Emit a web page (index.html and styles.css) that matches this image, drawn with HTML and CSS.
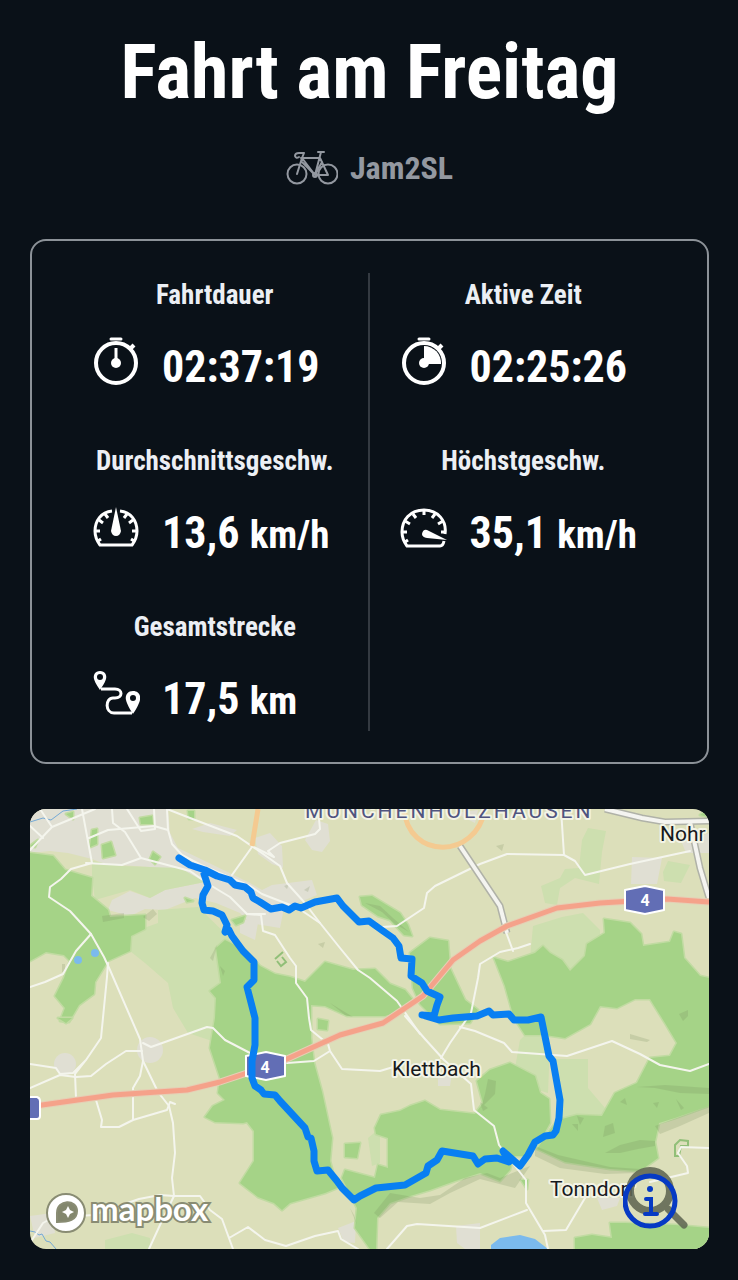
FILE: index.html
```
<!DOCTYPE html>
<html lang="de">
<head>
  <meta charset="UTF-8">
  <meta name="viewport" content="width=device-width, initial-scale=1">
  <title>Fahrt am Freitag</title>
  <link rel="stylesheet" href="styles.css">
</head>
<body>

<header class="kopf">
  <h1>Fahrt am Freitag</h1>
  <p class="rad">
    <svg class="rad-icon" viewBox="0 0 52 36" fill="none" stroke="currentColor" stroke-width="2" stroke-linecap="round" stroke-linejoin="round" aria-hidden="true">
      <circle cx="11" cy="24" r="9.5"/>
      <circle cx="42" cy="24" r="9.5"/>
      <path d="M11 24L16 8L29 25H42L34 8H15M29 25L35 2M32 2H38M16 12L29 25M16 8L18 3H13Q9 3 9 6Q10 9 13 7M29 25L36 12"/>
      <circle cx="29" cy="25" r="2"/>
    </svg>
    <span>Jam2SL</span>
  </p>
</header>

<main>
  <section class="werte">
    <div class="spalte">
      <div class="wert">
        <h2>Fahrtdauer</h2>
        <p>
          <svg class="icon" viewBox="0 0 48 48" fill="none" stroke="currentColor" stroke-width="4" aria-hidden="true">
            <circle cx="24" cy="26" r="20"/>
            <path d="M24 11V26" stroke-width="3"/>
            <path d="M19 2H29" stroke-width="3" stroke-linecap="round"/>
            <path d="M38 12L42 8"/>
            <circle cx="24" cy="26" r="5" fill="currentColor" stroke="none"/>
          </svg>
          <span>02:37:19</span>
        </p>
      </div>
      <div class="wert">
        <h2>Durchschnittsgeschw.</h2>
        <p>
          <svg class="icon" viewBox="0 0 48 48" fill="none" stroke="currentColor" stroke-width="3" aria-hidden="true">
            <path d="M20 8C9 9 3 18 3 28C3 34 5 38 8 42H40C43 38 45 34 45 28C45 18 39 9 28 8"/>
            <path d="M3 28H8M6 38L9 36M7 17L11 20M13 11L16 15M45 28H40M42 38L39 36M41 17L37 20M35 11L32 15"/>
            <path d="M24 4L29 28Q28 33 24 33Q20 33 19 28Z" fill="currentColor" stroke="none"/>
          </svg>
          <span>13,6 <small>km/h</small></span>
        </p>
      </div>
      <div class="wert">
        <h2>Gesamtstrecke</h2>
        <p>
          <svg class="icon" viewBox="0 0 48 48" fill="none" aria-hidden="true">
            <path d="M9 20H23C31 20 31 29 23 29H21C13 29 13 44 22 44H40" stroke="currentColor" stroke-width="3"/>
            <path fill-rule="evenodd" d="M8 2C3 2 1 6 2 10C3 14 8 21 8 21C8 21 13 14 14 10C15 6 13 2 8 2ZM8 5A3 3 0 1 1 8 11A3 3 0 1 1 8 5Z" fill="currentColor"/>
            <path fill-rule="evenodd" d="M41 22C35 22 33 27 34 31C35 36 41 45 41 45C41 45 47 36 48 31C49 27 47 22 41 22ZM41 26A3 3 0 1 1 41 32A3 3 0 1 1 41 26Z" fill="currentColor"/>
          </svg>
          <span>17,5 <small>km</small></span>
        </p>
      </div>
    </div>
    <div class="spalte">
      <div class="wert">
        <h2>Aktive Zeit</h2>
        <p>
          <svg class="icon" viewBox="0 0 48 48" fill="none" stroke="currentColor" stroke-width="4" aria-hidden="true">
            <circle cx="24" cy="26" r="20"/>
            <path d="M19 2H29" stroke-width="3" stroke-linecap="round"/>
            <path d="M38 12L42 8"/>
            <path d="M24 9A17 17 0 0 1 41 27H24Z" fill="currentColor" stroke="none"/>
            <circle cx="24" cy="26" r="5" fill="currentColor" stroke="none"/>
          </svg>
          <span>02:25:26</span>
        </p>
      </div>
      <div class="wert">
        <h2>Höchstgeschw.</h2>
        <p>
          <svg class="icon" viewBox="0 0 48 48" fill="none" stroke="currentColor" stroke-width="3" aria-hidden="true">
            <path d="M45 31C47 18 38 7 24 7C10 7 2 17 2 29C2 35 4 39 7 43H40Q43 43 44 38"/>
            <path d="M2 29H7M5 39L8 37M5 18L10 21M13 11L16 15M24 7V12M35 11L32 15M43 18L38 21M45 29H41"/>
            <path d="M27 27L47 37L27 35Q22 34 22 31Q23 26 27 27Z" fill="currentColor" stroke="none"/>
          </svg>
          <span>35,1 <small>km/h</small></span>
        </p>
      </div>
    </div>
  </section>

  <section class="karte">
    <svg class="karte-bild" viewBox="30 811 679 440" role="img" aria-label="Karte der Strecke">
      <rect class="land" x="30" y="811" width="679" height="440"/>

      <!-- Orte -->
      <path class="ort" d="M30 811H168L170 835L178 850L205 863L250 885L262 892L272 887L312 882L317 897L300 904L284 910L280 930L250 925L240 915L216 905L195 900L165 912L145 911L130 918L108 912L112 902L130 893L150 900L165 892L205 884L150 869L105 866L92 861L68 855L50 853L30 855Z"/>
      <path class="ort" d="M192 831L210 825L237 832L230 838L203 834ZM255 840L270 835L282 848L283 870L272 866L258 856ZM316 822L328 826L330 843L322 854L312 852L305 842ZM240 920L258 925L255 942L240 935ZM632 859L662 860L657 886H631ZM682 845L709 835V855H686ZM455 815L478 812L475 825Z"/>
      <circle class="ort" cx="65" cy="1066" r="11"/>
      <circle class="ort" cx="150" cy="1052" r="13"/>
      <path class="ort" d="M338 1230L356 1223L355 1245L344 1244ZM456 1228L480 1225V1251H465L457 1245ZM30 1218L52 1215L55 1235L35 1240ZM597 1200H620L617 1208L602 1212ZM438 1080L452 1075L450 1088H438Z"/>

      <!-- Wiesen -->
      <path class="wiese" d="M92 863L120 868L180 870L205 884L165 892L150 900L130 892L95 902L92 880ZM158 912L198 909L230 940L220 990L218 1045L188 1035L173 1010L168 985L145 965L130 953V935L158 925ZM582 842L588 830L606 833L602 854L599 886L575 880L560 890L557 907L545 905L541 888L560 880L565 871L579 870ZM663 874L668 863L690 867L681 885L664 883ZM533 928L562 919L583 915L600 932L600 955L570 974L550 966L530 960ZM552 1061H588V1090L605 1110L602 1120L560 1130ZM105 1242L132 1235L150 1240V1251H105ZM368 1140L380 1130V1165L372 1168Z"/>
      <path class="wiese" d="M520 1042L530 1032L550 1045L548 1095L525 1088L515 1070Z"/>

      <!-- Wald -->
      <g class="wald">
        <path d="M30 855L53 858L65 872L92 880L91 898L108 912L110 919L145 917V931L131 938L130 953L108 963L95 984L94 996L79 1007L69 1024L60 1023L65 1010L55 998L64 980L70 963L64 957L46 954L30 963Z"/>
        <path d="M216 950L225 942L245 952L260 968L275 976L290 979L305 984L325 964L353 972L375 971L390 986L405 992L414 1003L404 1012L385 1018L347 1018L325 1008L311 1007L311 1040L314 1065L322 1094L332 1140L330 1163L337 1190L325 1195L290 1205L282 1212L274 1205L258 1199L240 1185L254 1163V1133L247 1124L243 1125L215 1124L205 1119L213 1108L225 1102L218 1095L220 1080L210 1050L215 1020L216 1000L210 993L221 985Z"/>
        <path d="M410 955L430 940L448 943L450 970L465 1002L478 1012L470 1025L440 1026L420 1006L413 990Z"/>
        <path d="M360 899L372 898L385 906L400 915L408 927L412 938L404 937L390 922L378 918L362 907Z"/>
        <path d="M494 960L508 964L535 955L543 948L550 955L562 962L570 973L585 958L587 946L605 935L604 921L630 925L641 936L643 948L670 944L674 934L681 936L684 960L700 978L709 980V1108L675 1120L659 1125L655 1144L658 1160L640 1173L610 1171L565 1164L537 1151L550 1132L558 1122L577 1117L602 1118L615 1095L637 1085L650 1060L670 1058L677 1045L665 1025L650 1001L635 1001L617 1010L600 1008L590 1026L565 1040L545 1037L525 1037L514 1020L505 988Z"/>
        <path d="M375 1130L381 1117L400 1113L410 1108L425 1103L440 1112L475 1116L483 1105L477 1083L490 1072L510 1065L535 1078L540 1095L549 1101L550 1125L540 1143L525 1158L513 1158L510 1172L500 1183L480 1175L455 1183L430 1192L410 1198L390 1205L377 1220L376 1251H370L355 1230L357 1210L342 1180L345 1172L375 1180L378 1167L388 1170L388 1140L376 1136Z"/>
        <path d="M345 1146L360 1145L357 1160L345 1159ZM318 1021L328 1023L327 1032L318 1031Z"/>
        <path d="M575 1240L592 1237L612 1240L610 1225L625 1225L675 1227L709 1230V1251H575ZM58 1020H72L66 1025Z"/>
        <path d="M140 820L152 818L153 826H141ZM92 832L97 831L97 846L90 849ZM102 847L111 844L115 857L103 860ZM153 854L160 859L155 866L150 861ZM188 813H194V821H189ZM232 922L245 918L243 924L236 927ZM185 900L193 903L187 904ZM66 816L73 814V821ZM30 848L38 842L35 849ZM501 811L510 812L507 817ZM700 817L709 811V819ZM521 1182H528L527 1191Z"/>
      </g>
      <g class="schatten">
        <path d="M102 918L124 915V920L103 924ZM143 919L153 911L157 916L149 923ZM210 960L217 947L213 963ZM220 968L225 973L223 978ZM214 990L218 996ZM284 888L289 886L287 891ZM304 892L310 888L308 894ZM318 946L325 944L323 950ZM330 1005L353 1019L345 1017ZM370 998L377 1000ZM496 848L504 846L502 853ZM511 862L516 861ZM365 905L380 908L393 920L409 934L395 926L382 914ZM62 966H65V974H62ZM679 1016L688 1012V1018L683 1023ZM630 1036L650 1042L647 1044L630 1041Z"/>
        <path d="M605 1128L613 1125L615 1135L603 1139ZM577 1118L584 1120L580 1127ZM572 1126H578V1133ZM653 1105L659 1104L657 1110ZM676 1101L684 1110L681 1112ZM620 1104L625 1100L627 1107ZM637 1089L665 1087L709 1090V1096L680 1095L655 1090ZM605 1155L620 1147L640 1142L655 1143L655 1148L638 1151L620 1155ZM480 1104L488 1110L483 1113ZM488 1081L496 1083L495 1096L481 1110L485 1096Z"/>
        <path d="M390 1195L420 1200L440 1197L465 1180L487 1175L500 1180L530 1168L515 1190L480 1181L450 1195L430 1206L398 1204L380 1220L374 1215Z"/>
        <path d="M535 1148L558 1157L610 1169L640 1171L637 1175L605 1176L560 1170L535 1158ZM350 1210L354 1217L357 1227ZM655 1128L709 1108V1115L680 1128L660 1136Z"/>
      </g>
      <path class="ufer" d="M675 1158V1147L680 1142L688 1143V1148H681L679 1158ZM275 961L283 954M277 963L281 968L286 964L282 959"/>

      <!-- Wasser -->
      <path class="wasser" d="M491 1247L500 1240L520 1237L535 1241L548 1251H491Z"/>
      <circle class="wasser" cx="78" cy="962" r="4"/>
      <circle class="wasser" cx="95" cy="955" r="4"/>
      <path class="bach" d="M30 824L43 820L51 822L63 813L77 811M30 1233L35 1234L39 1237L42 1236L46 1243L50 1244L56 1251"/>

      <!-- Wege -->
      <g class="weg">
        <path d="M40 811L52 829L30 852M30 828L43 840M52 829L95 811M82 811L92 865L71 871L61 881L50 889L49 899L70 913L91 936L104 959L110 972L140 1041L143 1063L158 1094L169 1108L173 1125L175 1155L172 1180L174 1198L160 1227L149 1251"/>
        <path d="M91 936L76 953L63 976L45 984L30 989M108 965L107 979L101 1040L86 1062L75 1076L76 1100M30 1066L56 1070L60 1076L73 1075L86 1062"/>
        <path d="M30 1090L60 1077L76 1079L91 1078L106 1066L126 1053H142M143 1045L151 1049L207 1029L213 1030L225 1042L250 1055M143 1063L140 1078L133 1090V1122L119 1129H101L102 1122L96 1102M133 1122L167 1112L170 1104L175 1106"/>
        <path d="M86 865L122 867L141 860L190 873L210 887L230 899L247 916H265M89 840L108 832L154 828L168 832L172 846L182 857L201 867L250 888L262 896L298 910L320 925L340 950L358 972L370 980L397 1003L420 1036"/>
        <path d="M112 811L113 825L125 834L141 860M127 811L141 833L155 831L154 811M168 832L167 811L190 820L237 838L259 853L280 868L287 885L304 904L320 925"/>
        <path d="M252 849L232 877M252 848L274 859L268 853L280 845L315 836L320 831L318 811M382 929L397 928L424 910L427 895L435 888L480 866L507 856L564 857L575 863L585 877L630 866L690 853M564 857L561 811"/>
        <path d="M247 916L261 917L263 933L275 937L290 960L296 968V985L307 1000L309 1020L311 1032L328 1046L330 1053L342 1071L380 1073L400 1067M330 1053L314 1063L287 1065"/>
        <path d="M530 946L518 950L500 954L480 966L478 980L471 1015L450 1045L441 1060M405 1018L425 1041L444 1062L471 1086L474 1112L494 1128L499 1147L515 1168L526 1182V1205L545 1237L548 1251"/>
        <path d="M460 1029L475 1033L504 1045L512 1054L567 1058L612 1043L640 1056L660 1067L690 1073L709 1066M480 1230L527 1212M543 1233L566 1232L585 1200M650 1184L688 1175L687 1168L678 1155L681 1149L709 1150"/>
        <path d="M30 1245L43 1225L52 1220L93 1217L139 1201L160 1197L174 1198L200 1198L210 1212L222 1221L233 1251M229 1240L248 1229L265 1242L286 1248L315 1238L338 1233L341 1241L358 1251M387 1251L407 1228L417 1226L480 1230"/>
      </g>
      <path class="strasse-rand" d="M460 848L500 908L507 935M605 811L642 820L665 824L709 823M690 824L700 870L709 900"/>
      <path class="strasse" d="M460 848L500 908L507 935M605 811L642 820L665 824L709 823M690 824L700 870L709 900"/>
      <path class="weg" d="M506 934L513 953"/>
      <path class="bundes" d="M258 811L252 848M404 811C408 862 476 862 485 811"/>

      <!-- A4 -->
      <path class="autobahn-rand" d="M30 1109L42 1107L113 1097L187 1092L220 1084L250 1074L287 1061L340 1037L383 1025L423 998L453 962L480 943L507 928L557 910L600 905L667 901L709 904"/>
      <path class="autobahn" d="M30 1109L42 1107L113 1097L187 1092L220 1084L250 1074L287 1061L340 1037L383 1025L423 998L453 962L480 943L507 928L557 910L600 905L667 901L709 904"/>
      <g class="schild">
        <path d="M625 892L645 888L664 892V912L645 916L625 912Z"/>
        <path d="M246 1058L266 1054L285 1058V1078L266 1082L246 1078Z"/>
        <path d="M20 1099L37 1099Q40 1100 40 1103V1118Q40 1121 37 1121H20Z"/>
      </g>
      <text class="schild-text" x="645" y="908">4</text>
      <text class="schild-text" x="265" y="1075">4</text>

      <text class="gebiet" x="305" y="820">MÜNCHENHOLZHAUSEN</text>
      <text class="stadt" x="660" y="843">Nohr</text>
      <text class="stadt" x="392" y="1078">Klettbach</text>
      <text class="stadt" x="550" y="1198">Tonndorf</text>

      <path class="route" d="M179 860L190 867L205 872L217 878L230 882L235 887L245 889L251 894L253 900L260 904L271 911L282 909L289 912L295 908L301 910L315 904L337 900L343 908L353 918L359 924L369 923L383 933L393 940L399 948L401 960L412 961L411 978L422 985L427 993L440 999L437 1007L434 1018L422 1017L439 1022L453 1020L477 1018L489 1013L493 1017L509 1016L514 1022L528 1022L541 1019L549 1058L553 1063L560 1102L559 1120L556 1133L553 1137L545 1138L535 1144L528 1157L520 1168L503 1153L509 1164L497 1160L485 1161L478 1166L473 1158L442 1153L437 1162L428 1168L426 1175L405 1187L376 1190L360 1198L354 1202L342 1190L337 1183L328 1172L317 1173L314 1163V1153L311 1140L308 1139L305 1130L280 1103L275 1097L264 1096L261 1092L255 1088L252 1080V1063L255 1047V1020L247 989L254 982V964L243 953L232 938L229 932L225 934L227 927L222 917L213 913L204 912L202 905L203 897L208 888L204 876"/>

      <!-- Mapbox-Logo -->
      <g class="logo">
        <circle cx="66" cy="1215" r="19"/>
        <path class="logo-zeichen" d="M57 1224V1215C57 1201 77 1201 77 1213C77 1222 69 1224 57 1224Z"/>
        <path d="M68 1208L70 1212L74 1214L70 1216L68 1220L66 1216L62 1214L66 1212Z" stroke="none"/>
        <text x="91" y="1223">mapbox</text>
      </g>
    </svg>
    <button class="info" type="button" aria-label="Karteninformationen">
      <svg viewBox="0 0 70 66" fill="none" aria-hidden="true">
        <g class="lupe">
          <circle cx="27" cy="24" r="20" stroke-width="8"/>
          <path d="M45 42L61 58" stroke-width="7" stroke-linecap="round"/>
        </g>
        <circle cx="27" cy="34" r="25" stroke="#063ac4" stroke-width="5"/>
        <circle cx="27" cy="22" r="3" fill="#063ac4"/>
        <path d="M23 32H28V46M22 47H34" stroke="#063ac4" stroke-width="4" stroke-linecap="round"/>
      </svg>
    </button>
  </section>
</main>

</body>
</html>
```
FILE: styles.css
```
* {
  box-sizing: border-box;
}
body {
  margin: 0;
  padding: 16px 29px 29px 30px;
  background-color: #0a1118;
  color: #fff;
  font-family: "Roboto Condensed", Roboto, "Liberation Sans", sans-serif;
}
h1, h2, p {
  margin: 0;
}
.kopf {
  text-align: center;
}
h1 {
  font-size: 76px;
  line-height: 112px;
  font-weight: bold;
}
.rad {
  display: flex;
  justify-content: center;
  align-items: center;
  gap: 12px;
  margin-top: 16px;
  color: #9398a0;
  font-size: 32px;
  line-height: 48px;
  font-weight: bold;
}
.rad-icon {
  width: 52px;
  height: 36px;
}
.werte {
  display: grid;
  grid-template-columns: 1fr 1fr;
  margin-top: 47px;
  padding: 32px 30px 31px;
  border: 2px solid #8c9298;
  border-radius: 16px;
}
.spalte {
  display: flex;
  flex-direction: column;
  gap: 40px;
}
.spalte:first-child {
  border-right: 2px solid #343a41;
}
.wert h2 {
  color: #eceff4;
  font-size: 27px;
  line-height: 44px;
  font-weight: bold;
  text-align: center;
}
.wert p {
  display: flex;
  align-items: center;
  gap: 22px;
  margin-top: 18px;
  padding-left: 30px;
  font-size: 44px;
  line-height: 64px;
  font-weight: bold;
  white-space: nowrap;
}
.wert small {
  font-size: 39px;
  line-height: 1;
}
.icon {
  width: 48px;
  height: 48px;
  margin-bottom: 12px;
}
.karte {
  position: relative;
  margin-top: 45px;
  border-radius: 16px;
  overflow: hidden;
}
.karte-bild {
  display: block;
  width: 100%;
}

/* Karte */
.land {
  fill: #dcdfba;
}
.ort {
  fill: #e0dfd3;
}
.wiese {
  fill: #cddfaf;
}
.wald {
  fill: #a5d387;
  stroke: #c1dba2;
  stroke-width: 3;
  stroke-linejoin: round;
  paint-order: stroke;
}
.schatten {
  fill: #718958;
  opacity: 0.2;
}
.ufer {
  fill: none;
  stroke: #91bf78;
  stroke-width: 2;
}
.wasser {
  fill: #7bbaed;
}
.bach {
  fill: none;
  stroke: #74a9d5;
  stroke-width: 1;
}
.weg {
  fill: none;
  stroke: #f4f5ed;
  stroke-width: 2;
  stroke-linejoin: round;
  stroke-linecap: round;
}
.strasse-rand {
  fill: none;
  stroke: #b0b2a8;
  stroke-width: 7;
}
.strasse {
  fill: none;
  stroke: #f4f4f0;
  stroke-width: 4;
}
.bundes {
  fill: none;
  stroke: #f4ca91;
  stroke-width: 5;
}
.autobahn-rand {
  fill: none;
  stroke: #e6ceb5;
  stroke-width: 7;
}
.autobahn {
  fill: none;
  stroke: #f5a28a;
  stroke-width: 5;
  stroke-linejoin: round;
}
.schild {
  fill: #626eb5;
  stroke: #fff;
  stroke-width: 2;
  stroke-linejoin: round;
}
.schild-text {
  fill: #fff;
  font: bold 16px Roboto, sans-serif;
  text-anchor: middle;
}
.gebiet, .stadt {
  stroke: #f3f4e6;
  stroke-width: 4;
  stroke-linejoin: round;
  paint-order: stroke;
}
.gebiet {
  fill: #50547f;
  font: 21px Roboto, sans-serif;
  letter-spacing: 3px;
}
.stadt {
  fill: #17191c;
  font: 21px Roboto, sans-serif;
}
.route {
  fill: none;
  stroke: #087ff2;
  stroke-width: 7;
  stroke-linejoin: round;
  stroke-linecap: round;
}
.logo {
  fill: #fff;
  stroke: #898c73;
  stroke-width: 2;
}
.logo-zeichen {
  fill: #83876d;
}
.logo text {
  font: bold 33px Lato, sans-serif;
  stroke-width: 4;
  paint-order: stroke;
}
.info {
  position: absolute;
  right: 16px;
  bottom: 16px;
  width: 70px;
  height: 66px;
  padding: 0;
  border: 0;
  background: none;
  cursor: pointer;
}
.lupe {
  stroke: #606753;
  opacity: 0.88;
}
```
